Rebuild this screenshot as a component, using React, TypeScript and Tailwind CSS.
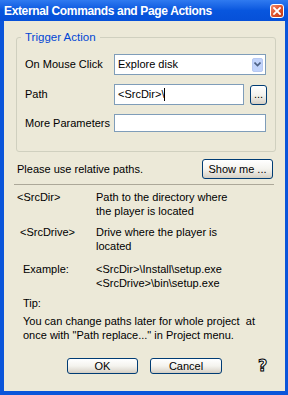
import React from "react";

function XpButton({ children, className = "" }: { children: React.ReactNode; className?: string }) {
  return (
    <button
      className={
        "flex items-center justify-center rounded-[3px] border border-[#003C74] bg-gradient-to-b from-[#FFFFFF] via-[#F4F3EE] to-[#D6D0C5] text-black shadow-[inset_0_-1px_0_#D6D0C5] " +
        className
      }
    >
      {children}
    </button>
  );
}

function CloseButton() {
  return (
    <div className="w-[14px] h-[14px] rounded-[3px] border border-white bg-gradient-to-br from-[#F08A6A] via-[#E0522C] to-[#C23A14] flex items-center justify-center">
      <svg width="8" height="8" viewBox="0 0 8 8">
        <path d="M1 1 L7 7 M7 1 L1 7" stroke="white" strokeWidth="1.8" strokeLinecap="square" />
      </svg>
    </div>
  );
}

export default function App() {
  return (
    <div className="w-[288px] h-[395px] flex flex-col bg-[#0A55DA] font-['Liberation_Sans',Arial,sans-serif] text-[11px] text-black">
      <div className="h-[21px] flex items-center pl-[4px] pr-[4px] bg-gradient-to-b from-[#2F7AF0] via-[#0856DE] to-[#0650D8]">
        <span className="flex-1 text-white font-bold text-[12px] tracking-[-0.35px] leading-none">
          External Commands and Page Actions
        </span>
        <CloseButton />
      </div>

      <div className="flex-1 ml-[4px] mr-[3px] mb-[4px] bg-[#ECE9D8] flex flex-col pt-[10px]">
        <fieldset className="ml-[12px] w-[260px] border border-[#D0D0BF] rounded-[3px] px-[8px] pt-[10px] pb-[19px]">
          <legend className="-ml-[4px] px-[4px] text-[#0046D5] text-[11.5px] leading-[13px]">Trigger Action</legend>

          <div className="flex items-center h-[21px]">
            <span className="w-[89px]">On Mouse Click</span>
            <div className="w-[152px] h-[21px] border border-[#7F9DB9] bg-white flex items-center pl-[3px] pr-[2px]">
              <span className="flex-1">Explore disk</span>
              <div className="w-[11px] h-[14px] rounded-[2px] bg-[#C1D3FB] border border-[#B7C9F2] flex items-center justify-center">
                <svg width="7" height="5" viewBox="0 0 7 5">
                  <path d="M0.5 0.5 L3.5 3.5 L6.5 0.5" stroke="#4D6185" strokeWidth="1.6" fill="none" />
                </svg>
              </div>
            </div>
          </div>

          <div className="flex items-center h-[21px] mt-[9px]">
            <span className="w-[89px]">Path</span>
            <div className="w-[130px] h-[21px] border border-[#7F9DB9] bg-white flex items-center pl-[3px]">
              <span>&lt;SrcDir&gt;\</span>
              <span className="w-[1px] h-[13px] bg-black" />
            </div>
            <XpButton className="ml-[6px] w-[17px] h-[20px] leading-none">...</XpButton>
          </div>

          <div className="flex items-center h-[18px] mt-[9px]">
            <span className="w-[89px]">More Parameters</span>
            <div className="w-[152px] h-[18px] border border-[#7F9DB9] bg-white" />
          </div>
        </fieldset>

        <div className="flex items-center justify-between pl-[13px] pr-[12px] mt-[7px]">
          <span>Please use relative paths.</span>
          <XpButton className="w-[71px] h-[20px]">Show me ...</XpButton>
        </div>

        <div className="ml-[10px] mr-[11px] mt-[5px] h-[1px] bg-[#ACA899]" />

        <div className="flex flex-col leading-[14px] pl-[13px]">
          <div className="flex mt-[5px]">
            <span className="w-[79px]">&lt;SrcDir&gt;</span>
            <span>
              Path to the directory where
              <br />
              the player is located
            </span>
          </div>
          <div className="flex mt-[7px]">
            <span className="w-[79px] pl-[3px]">&lt;SrcDrive&gt;</span>
            <span>
              Drive where the player is
              <br />
              located
            </span>
          </div>
          <div className="flex mt-[9px]">
            <span className="w-[79px] pl-[6px]">Example:</span>
            <span>
              &lt;SrcDir&gt;\Install\setup.exe
              <br />
              &lt;SrcDrive&gt;\bin\setup.exe
            </span>
          </div>
          <div className="pl-[6px] mt-[6px]">Tip:</div>
          <div className="pl-[6px] mt-[4px]">
            You can change paths later for whole project&nbsp; at
            <br />
            once with "Path replace..." in Project menu.
          </div>
        </div>

        <div className="flex items-center mt-[16px] pl-[63px]">
          <XpButton className="w-[71px] h-[16px]">OK</XpButton>
          <XpButton className="ml-[12px] w-[72px] h-[16px]">Cancel</XpButton>
          <span className="ml-[36px] text-white font-bold text-[16px] leading-none [-webkit-text-stroke:1px_black] font-['DejaVu_Sans',sans-serif]">
            ?
          </span>
        </div>
      </div>
    </div>
  );
}
